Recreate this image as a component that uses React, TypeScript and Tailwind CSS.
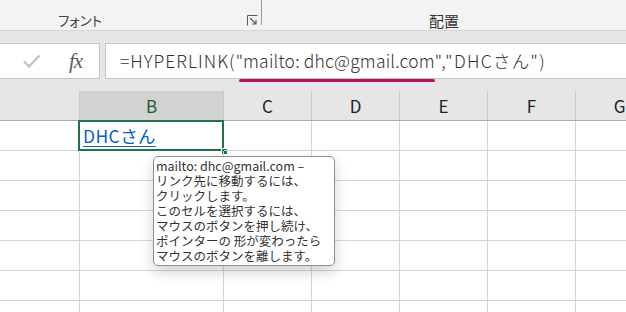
const jp = "font-['Noto_Sans_CJK_JP','Noto_Sans',sans-serif]";

const cols = [
  { key: "A", w: "w-[80px]" },
  { key: "B", w: "w-[144px]" },
  { key: "C", w: "w-[88px]" },
  { key: "D", w: "w-[88px]" },
  { key: "E", w: "w-[88px]" },
  { key: "F", w: "w-[88px]" },
  { key: "G", w: "w-[88px]" },
];

const tipLines = [
  "mailto: dhc@gmail.com –",
  "リンク先に移動するには、",
  "クリックします。",
  "このセルを選択するには、",
  "マウスのボタンを押し続け、",
  "ポインターの 形が変わったら",
  "マウスのボタンを離します。",
];

function Launcher() {
  return (
    <svg width="11" height="11" viewBox="0 0 11 11">
      <path d="M0.5 10.5 V0.5 H10.5" fill="none" stroke="#5a5a5a" strokeWidth="1" />
      <path d="M3 3 L9 9 M9 5 V9 H5" fill="none" stroke="#5a5a5a" strokeWidth="1.2" />
    </svg>
  );
}

function Ribbon() {
  return (
    <div className="flex h-[31px] bg-[#f3f3f3] border-b border-[#d6d6d6]">
      <div className="flex w-[261px] h-[25px] items-start">
        <span
          className={`${jp} text-[13.5px] text-[#444] pl-[58px] pt-[12px] leading-[16px] [font-feature-settings:'palt']`}
        >
          フォント
        </span>
        <div className="flex-1" />
        <div className="pt-[15px] pr-[3px]">
          <Launcher />
        </div>
      </div>
      <div className="w-px h-[25px] bg-[#9a9a9a]" />
      <div className="flex-1 flex justify-center">
        <span className={`${jp} text-[15px] text-[#333] pt-[12px] leading-[17px]`}>配置</span>
      </div>
    </div>
  );
}

function FormulaBar() {
  return (
    <div className="flex gap-[5px] bg-[#e6e6e6] pt-[12px] pb-[12px] h-[60px]">
      <div className="w-[100px] h-[36px] bg-white border border-l-0 border-[#c6c6c6] flex items-center">
        <svg width="20" height="16" viewBox="0 0 20 16" className="ml-[22px]">
          <path d="M2 8.5 L7 13.5 L17.5 2.5" fill="none" stroke="#c4c4c4" strokeWidth="2.4" />
        </svg>
        <span className="ml-[27px] font-['Liberation_Serif',serif] italic text-[21px] text-[#5b5b5b] leading-none tracking-[-1px]">
          fx
        </span>
      </div>
      <div className="flex-1 h-[36px] bg-white border border-r-0 border-[#c6c6c6] flex items-center pl-[14px]">
        <span className={`${jp} font-light text-[17.5px] text-[#333] whitespace-nowrap leading-none`}>
          <span className="tracking-[1px]">=HYPERLINK(</span>
          <span className="relative tracking-[0.2px]">
            "mailto: dhc@gmail.com
            <span className="absolute left-[3px] right-[0px] bottom-[-9px] h-[3px] rounded-full bg-[#b3145e]" />
          </span>
          <span className="tracking-[1.3px]">","DHCさん")</span>
        </span>
      </div>
    </div>
  );
}

function HeaderRow() {
  return (
    <div className="flex h-[30px] bg-[#e6e6e6] border-b border-[#ababab]">
      {cols.map((c) => {
        const sel = c.key === "B";
        return (
          <div
            key={c.key}
            className={`${c.w} shrink-0 h-full flex items-center justify-center border-r border-[#c8c8c8] ${
              sel ? "bg-[#d2d2d2] text-[#1e5a3a]" : "text-[#222]"
            }`}
          >
            {c.key !== "A" && (
              <span className={`${jp} text-[17px] leading-none`}>{c.key}</span>
            )}
          </div>
        );
      })}
    </div>
  );
}

function Grid() {
  const rows = [0, 1, 2, 3, 4, 5, 6];
  return (
    <div className="bg-white">
      {rows.map((r) => (
        <div key={r} className="flex h-[30px]">
          {cols.map((c) => (
            <div
              key={c.key}
              className={`${c.w} shrink-0 h-full border-r border-b border-[#d4d4d4] relative`}
            >
              {r === 0 && c.key === "B" && (
                <>
                  <span
                    className={`${jp} absolute left-[3px] top-[5px] text-[17.5px] leading-[19px] tracking-[0.4px] text-[#0563c1] underline underline-offset-[3px]`}
                  >
                    DHCさん
                  </span>
                  <div className="absolute left-[-2px] top-[-1px] right-[-1px] bottom-[-1px] border-2 border-[#217346]" />
                  <div className="absolute right-[-5px] bottom-[-5px] w-[7px] h-[7px] bg-[#217346] border border-white" />
                </>
              )}
            </div>
          ))}
        </div>
      ))}
    </div>
  );
}

function Tooltip() {
  return (
    <div className="absolute left-[153px] top-[156px] w-[182px] h-[110px] bg-white border border-[#8e8e8e] rounded-[5px] shadow-[0_6px_14px_rgba(0,0,0,0.18)] px-[2px] pt-[1px]">
      {tipLines.map((l) => (
        <div key={l} className={`${jp} text-[12.5px] leading-[15px] text-[#333] whitespace-nowrap`}>
          {l}
        </div>
      ))}
    </div>
  );
}

export default function App() {
  return (
    <div className="relative w-[626px] h-[312px] overflow-hidden bg-white">
      <Ribbon />
      <FormulaBar />
      <HeaderRow />
      <Grid />
      <Tooltip />
    </div>
  );
}
